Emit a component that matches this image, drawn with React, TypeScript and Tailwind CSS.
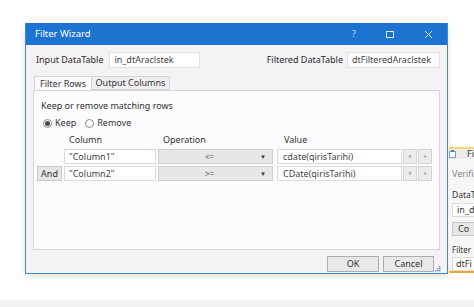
import React from "react";

const font = { fontFamily: '"Noto Sans", "Open Sans", Arial, sans-serif' };

const rows = [
  { and: false, column: "\"Column1\"", op: "<=", value: "cdate(qirisTarihi)" },
  { and: true, column: "\"Column2\"", op: ">=", value: "CDate(qirisTarihi)" },
];

function Radio({ checked, label }: { checked?: boolean; label: string }) {
  return (
    <label className="flex items-center gap-[3px]">
      <span className="flex h-[9px] w-[9px] items-center justify-center rounded-full border border-[#8a8a8a] bg-white">
        {checked && <span className="h-[5px] w-[5px] rounded-full bg-[#4a4a4a]" />}
      </span>
      <span>{label}</span>
    </label>
  );
}

function FilterRow({ and, column, op, value }: (typeof rows)[number]) {
  return (
    <div className="flex h-[15px] items-stretch">
      <div className="w-[25px]">
        {and && (
          <div className="flex h-full items-center justify-center border border-[#c9c9c9] bg-[#e6e6e6] text-[#333]">
            And
          </div>
        )}
      </div>
      <div className="ml-[2px] flex w-[92px] items-center border border-[#dadada] bg-white pl-[4px] text-[#444]">
        {column}
      </div>
      <div className="relative ml-[2px] flex w-[115px] items-center border border-[#cfcfcf] bg-[#e7e7e7] text-[#555]">
        <span className="flex-1 text-center text-[8px]">{op}</span>
        <span className="w-[12px] text-[6px] text-[#333]">▼</span>
      </div>
      <div className="ml-[4px] flex w-[125px] items-center border border-[#dadada] bg-white pl-[5px] text-[#444]">
        {value}
      </div>
      <div className="ml-[1px] flex w-[14px] items-center justify-center border border-[#d4d4d4] bg-[#ececec] text-[7px] text-[#8a8a8a]">
        ×
      </div>
      <div className="ml-[1px] flex w-[14px] items-center justify-center border border-[#d4d4d4] bg-[#ececec] text-[7px] text-[#8a8a8a]">
        +
      </div>
    </div>
  );
}

export default function App() {
  return (
    <div className="relative h-[307px] w-[474px] overflow-hidden bg-white text-[9px] leading-[12px] text-[#2b2b2b]" style={font}>
      {/* main dialog */}
      <div className="ml-[25px] mt-[23px] flex h-[251px] w-[423px] flex-col border border-t-0 border-[#3f86d6] bg-[#f4f2f4] shadow-[0_2px_6px_rgba(0,0,0,0.12)]">
        {/* title bar */}
        <div className="flex h-[22px] items-center bg-[#1e72d0] pl-[9px] pr-[14px] text-[9.5px] text-white">
          <span className="flex-1">Filter Wizard</span>
          <span className="mr-[30px] text-[9px] text-[#c9defa]">?</span>
          <span className="mr-[30px] h-[7px] w-[8px] border border-[#d9e8fb]" />
          <svg width="9" height="9" viewBox="0 0 9 9" className="text-[#d9e8fb]">
            <path d="M1 1 L8 8 M8 1 L1 8" stroke="currentColor" strokeWidth="1" />
          </svg>
        </div>

        {/* data table row */}
        <div className="mt-[7px] flex h-[16px] items-center pl-[10px] pr-[7px]">
          <span>Input DataTable</span>
          <div className="ml-[6px] flex h-full w-[91px] items-center border border-[#e0e0e0] bg-white pl-[4px] text-[#444]">
            in_dtAraclstek
          </div>
          <span className="ml-auto">Filtered DataTable</span>
          <div className="ml-[4px] flex h-full w-[93px] items-center border border-[#e0e0e0] bg-white pl-[4px] text-[#444]">
            dtFilteredAraclstek
          </div>
        </div>

        {/* tabs */}
        <div className="ml-[8px] mt-[8px] flex h-[14px]">
          <div className="flex w-[58px] items-center justify-center border border-b-0 border-[#d3d3d3] bg-[#fdfbfd] text-[#333]">
            Filter Rows
          </div>
          <div className="flex w-[78px] items-center justify-center border border-l-0 border-[#d3d3d3] bg-[#f0eef0] text-[#333]">
            Output Columns
          </div>
        </div>

        {/* tab panel */}
        <div className="ml-[7px] flex h-[160px] w-[407px] flex-col border border-[#d6d6d6] bg-[#fdfbfd]">
          <div className="ml-[7px] mt-[9px] text-[#333]">Keep or remove matching rows</div>
          <div className="ml-[9px] mt-[5px] flex gap-[9px] text-[#333]">
            <Radio checked label="Keep" />
            <Radio label="Remove" />
          </div>
          <div className="ml-[4px] mt-[5px] flex h-[12px] items-center text-[#333]">
            <span className="ml-[31px] w-[94px]">Column</span>
            <span className="w-[121px]">Operation</span>
            <span>Value</span>
          </div>
          <div className="ml-[3px] mt-[3px] flex flex-col gap-[2px]">
            {rows.map((r) => (
              <FilterRow key={r.column} {...r} />
            ))}
          </div>
        </div>

        {/* footer buttons */}
        <div className="mt-[6px] flex items-start justify-end pr-[6px]">
          <div className="flex h-[16px] w-[52px] items-center justify-center border border-[#adadad] bg-[#e9e9e9] text-[#333]">
            OK
          </div>
          <div className="ml-[4px] flex h-[16px] w-[51px] items-center justify-center border border-[#adadad] bg-[#e9e9e9] text-[#333]">
            Cancel
          </div>
          <svg width="6" height="6" viewBox="0 0 6 6" className="ml-[1px] mt-[10px]">
            <rect x="4" y="0" width="1.4" height="1.4" fill="#5b8fd0" />
            <rect x="2" y="2" width="1.4" height="1.4" fill="#5b8fd0" />
            <rect x="4" y="2" width="1.4" height="1.4" fill="#5b8fd0" />
            <rect x="0" y="4" width="1.4" height="1.4" fill="#5b8fd0" />
            <rect x="2" y="4" width="1.4" height="1.4" fill="#5b8fd0" />
            <rect x="4" y="4" width="1.4" height="1.4" fill="#5b8fd0" />
          </svg>
        </div>
      </div>

      {/* window behind, to the right */}
      <div className="absolute left-[449px] top-[147px] flex h-[126px] w-[30px] flex-col border-t-2 border-b-2 border-t-[#f3d774] border-b-[#f0a73a] bg-[#f6f6f6] text-[#333]">
        <div className="flex h-[10px] items-center bg-[#ececec]">
          <svg width="8" height="8" viewBox="0 0 8 8">
            <rect x="0.5" y="1.5" width="6" height="6" fill="#fff" stroke="#7a9cc8" />
            <rect x="2" y="0" width="3" height="2" fill="#4a7fc0" />
          </svg>
          <span className="ml-[10px]">Fi</span>
        </div>
        <div className="ml-[3px] mt-[9px] text-[#888]">Verifi</div>
        <div className="ml-[3px] mt-[9px] text-[8.5px]">DataT</div>
        <div className="ml-[3px] mt-[2px] flex h-[17px] items-center border border-[#dcdcdc] bg-white pl-[4px]">in_d</div>
        <div className="ml-[3px] mt-[5px] flex h-[15px] items-center border border-[#c8c8c8] bg-[#e6e6e6] pl-[5px]">Co</div>
        <div className="ml-[3px] mt-[8px] text-[8px]">Filter</div>
        <div className="ml-[3px] mt-[1px] flex h-[14px] items-center border border-[#dcdcdc] bg-white pl-[3px]">dtFi</div>
      </div>

      {/* taskbar-ish strip at bottom */}
      <div className="absolute bottom-0 left-0 h-[7px] w-[474px] bg-[#f2f2f2]" />
    </div>
  );
}
